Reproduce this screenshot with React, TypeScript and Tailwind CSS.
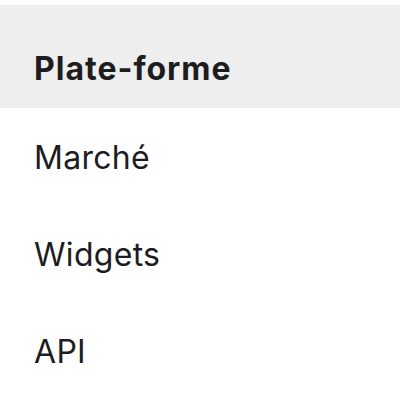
export default function App() {
  const items = ['Marché', 'Widgets', 'API'];

  return (
    <div className="w-[400px] h-[400px] bg-white overflow-hidden text-[#1d1d1f] font-['Inter',sans-serif]">
      <div className="mt-[5px] h-[103px] bg-[#eeeeee] pl-[34px] pt-[48px]">
        <h2 className="text-[32px] leading-none font-bold tracking-[1px]">Plate-forme</h2>
      </div>
      <ul className="flex flex-col gap-[65px] pt-[34px] pl-[34px]">
        {items.map(item => (
          <li key={item} className="text-[32px] leading-none tracking-[0.3px]">{item}</li>
        ))}
      </ul>
    </div>
  );
}
